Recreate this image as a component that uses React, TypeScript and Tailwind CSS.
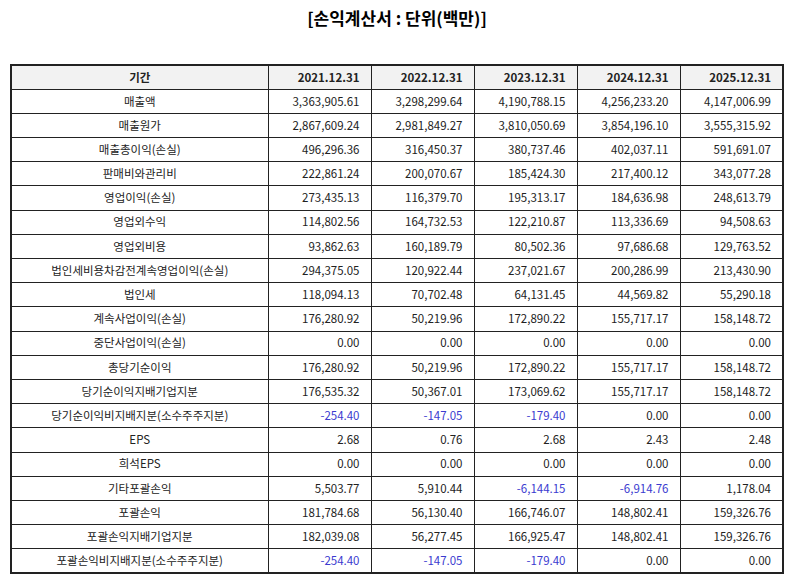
const years = ["2021.12.31", "2022.12.31", "2023.12.31", "2024.12.31", "2025.12.31"];

const rows: [string, string[]][] = [
  ["매출액", ["3,363,905.61", "3,298,299.64", "4,190,788.15", "4,256,233.20", "4,147,006.99"]],
  ["매출원가", ["2,867,609.24", "2,981,849.27", "3,810,050.69", "3,854,196.10", "3,555,315.92"]],
  ["매출총이익(손실)", ["496,296.36", "316,450.37", "380,737.46", "402,037.11", "591,691.07"]],
  ["판매비와관리비", ["222,861.24", "200,070.67", "185,424.30", "217,400.12", "343,077.28"]],
  ["영업이익(손실)", ["273,435.13", "116,379.70", "195,313.17", "184,636.98", "248,613.79"]],
  ["영업외수익", ["114,802.56", "164,732.53", "122,210.87", "113,336.69", "94,508.63"]],
  ["영업외비용", ["93,862.63", "160,189.79", "80,502.36", "97,686.68", "129,763.52"]],
  ["법인세비용차감전계속영업이익(손실)", ["294,375.05", "120,922.44", "237,021.67", "200,286.99", "213,430.90"]],
  ["법인세", ["118,094.13", "70,702.48", "64,131.45", "44,569.82", "55,290.18"]],
  ["계속사업이익(손실)", ["176,280.92", "50,219.96", "172,890.22", "155,717.17", "158,148.72"]],
  ["중단사업이익(손실)", ["0.00", "0.00", "0.00", "0.00", "0.00"]],
  ["총당기순이익", ["176,280.92", "50,219.96", "172,890.22", "155,717.17", "158,148.72"]],
  ["당기순이익지배기업지분", ["176,535.32", "50,367.01", "173,069.62", "155,717.17", "158,148.72"]],
  ["당기순이익비지배지분(소수주주지분)", ["-254.40", "-147.05", "-179.40", "0.00", "0.00"]],
  ["EPS", ["2.68", "0.76", "2.68", "2.43", "2.48"]],
  ["희석EPS", ["0.00", "0.00", "0.00", "0.00", "0.00"]],
  ["기타포괄손익", ["5,503.77", "5,910.44", "-6,144.15", "-6,914.76", "1,178.04"]],
  ["포괄손익", ["181,784.68", "56,130.40", "166,746.07", "148,802.41", "159,326.76"]],
  ["포괄손익지배기업지분", ["182,039.08", "56,277.45", "166,925.47", "148,802.41", "159,326.76"]],
  ["포괄손익비지배지분(소수주주지분)", ["-254.40", "-147.05", "-179.40", "0.00", "0.00"]],
];

export default function App() {
  return (
    <div
      className="w-[794px] h-[586px] bg-white text-[#222]"
      style={{ fontFamily: '"Noto Sans CJK KR", "Noto Sans", sans-serif' }}
    >
      <h1 className="pt-[6px] text-center text-[17px] font-bold leading-[24px] text-black">
        [손익계산서 : 단위(백만)]
      </h1>
      <table className="mt-[34px] ml-[10px] w-[774px] table-fixed border-collapse border-2 border-[#222] text-[11.5px]">
        <colgroup>
          <col className="w-[257px]" />
          {years.map((y) => (
            <col key={y} />
          ))}
        </colgroup>
        <thead>
          <tr className="h-[24.2px] bg-[#f2f2f2]">
            <th className="border border-[#222] text-center font-bold">기간</th>
            {years.map((y) => (
              <th key={y} className="border border-[#222] pr-[11px] text-right font-bold">
                {y}
              </th>
            ))}
          </tr>
        </thead>
        <tbody>
          {rows.map(([label, vals]) => (
            <tr key={label} className="h-[24.2px]">
              <td className="border border-[#222] text-center leading-none">{label}</td>
              {vals.map((v, i) => (
                <td
                  key={i}
                  className={`border border-[#222] pr-[11px] text-right leading-none ${
                    v.startsWith("-") ? "text-[#3b3bd0]" : ""
                  }`}
                >
                  {v}
                </td>
              ))}
            </tr>
          ))}
        </tbody>
      </table>
    </div>
  );
}
